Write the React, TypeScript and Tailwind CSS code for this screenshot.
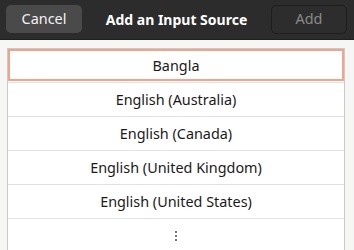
const languages = [
  "English (Australia)",
  "English (Canada)",
  "English (United Kingdom)",
  "English (United States)",
];

export default function App() {
  return (
    <div className="w-[354px] h-[250px] overflow-hidden bg-[#f6f6f5] flex flex-col font-['Noto_Sans',sans-serif] text-[14.4px]">
      <header className="h-[40px] shrink-0 bg-[#2c2c2c] border-b border-[#1f1f1f] flex items-center justify-between pl-[6px] pr-[7px]">
        <button className="w-[76px] h-[28px] rounded-[5px] bg-[#4a4a4a] text-[#f2f2f2] mb-[1px]">
          Cancel
        </button>
        <h1 className="text-white font-bold text-[14px]">Add an Input Source</h1>
        <button className="w-[76px] h-[29px] rounded-[5px] bg-[#2d2d2d] border border-[#1e1e1e] text-[#8a8a8a] mb-[1px]">
          Add
        </button>
      </header>

      <div className="pt-[8px] pl-[7px] pr-[9px]">
        <ul className="bg-white border border-[#c9c9c9] text-[#1a1a1a]">
          <li className="h-[34px] border-b border-[#e2e2e2] relative flex items-center justify-center">
            <span className="absolute inset-0 bottom-[1px] border-2 border-[#f2a48a]" />
            Bangla
          </li>
          {languages.map((name) => (
            <li key={name} className="h-[34px] border-b border-[#e2e2e2] flex items-center justify-center">
              {name}
            </li>
          ))}
          <li className="h-[34px] flex flex-col items-center justify-center gap-[2px]">
            <span className="w-[2px] h-[2px] bg-[#777]" />
            <span className="w-[2px] h-[2px] bg-[#777]" />
            <span className="w-[2px] h-[2px] bg-[#777]" />
          </li>
        </ul>
      </div>
    </div>
  );
}
